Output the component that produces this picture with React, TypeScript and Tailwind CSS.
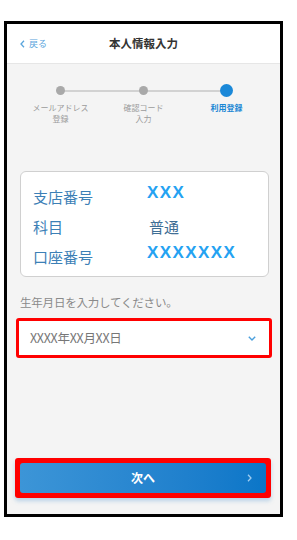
import React from 'react';

const jp = { fontFamily: '"Noto Sans CJK JP", "Noto Sans", sans-serif' };
const latin = { fontFamily: '"Liberation Sans", Arial, sans-serif' };

const Row = ({ label, value, strong }: { label: string; value: string; strong?: boolean }) => (
  <div className="h-[30px] flex items-center">
    <span className="w-[114px] text-[15px] text-[#3c80b6]">{label}</span>
    {strong ? (
      <span className="mb-[9px] text-[17px] font-bold tracking-[1.4px] text-[#24a2f2]" style={latin}>
        {value}
      </span>
    ) : (
      <span className="ml-[2px] text-[15px] text-[#3f6f95]">{value}</span>
    )}
  </div>
);

const StepLabel = ({ lines, active }: { lines: string[]; active?: boolean }) => (
  <div className={active ? 'font-bold text-[#1b87d4]' : 'text-[#9c9c9c]'}>
    {lines.map((l) => (
      <div key={l} className="h-[11px] leading-[11px]">
        {l}
      </div>
    ))}
  </div>
);

export default function App() {
  return (
    <div className="w-[297px] h-[540px] bg-white pt-[21px] pl-[4px]" style={jp}>
      <div className="w-[279px] h-[496px] border-[3px] border-black bg-[#f4f4f4] flex flex-col">
        {/* header */}
        <div className="h-[40px] shrink-0 bg-white border-b border-[#e6e6e6] grid grid-cols-3 items-center">
          <div className="flex items-center pl-[13px] gap-[4px] text-[#5aa5dc]">
            <svg width="5" height="8" viewBox="0 0 5 8">
              <path d="M4 0.8 L1 4 L4 7.2" fill="none" stroke="#5aa5dc" strokeWidth="1.3" />
            </svg>
            <span className="text-[9px] leading-none">戻る</span>
          </div>
          <div className="text-center text-[11.5px] font-bold text-[#333] whitespace-nowrap">本人情報入力</div>
          <div />
        </div>

        {/* stepper */}
        <div className="px-[12px] pt-[20px]">
          <div className="relative grid grid-cols-3 h-[13px]">
            <div className="absolute left-[42px] right-[42px] top-[5.5px] h-[2px] bg-[#d2d2d2]" />
            <div className="relative flex items-center justify-center">
              <div className="w-[9px] h-[9px] rounded-full bg-[#a9a9a9]" />
            </div>
            <div className="relative flex items-center justify-center">
              <div className="w-[9px] h-[9px] rounded-full bg-[#a9a9a9]" />
            </div>
            <div className="relative flex items-center justify-center">
              <div className="w-[13px] h-[13px] rounded-full bg-[#1a88d8]" />
            </div>
          </div>
          <div className="grid grid-cols-3 mt-[5px] text-[8px] text-center">
            <StepLabel lines={['メールアドレス', '登録']} />
            <StepLabel lines={['確認コード', '入力']} />
            <StepLabel lines={['利用登録']} active />
          </div>
        </div>

        {/* account card */}
        <div className="ml-[13px] mt-[47px] w-[249px] h-[106px] bg-white border border-[#d0d0d0] rounded-[6px] pt-[10px] px-[12px]">
          <Row label="支店番号" value="XXX" strong />
          <Row label="科目" value="普通" />
          <Row label="口座番号" value="XXXXXXX" strong />
        </div>

        <p className="ml-[13px] mt-[18px] text-[11.5px] leading-[14px] text-[#8a8a8a] tracking-[-0.2px]">生年月日を入力してください。</p>

        {/* birthday select */}
        <div className="ml-[9px] mt-[9px] w-[256px] h-[40px] border-[3px] border-[#ff0000] rounded-[3px] bg-white flex items-center justify-between pl-[11px] pr-[13px]">
          <span className="text-[12.5px] text-[#777] tracking-[-0.3px]">XXXX年XX月XX日</span>
          <svg width="8" height="5" viewBox="0 0 8 5">
            <path d="M0.8 0.8 L4 4 L7.2 0.8" fill="none" stroke="#4a9fdc" strokeWidth="1.4" />
          </svg>
        </div>

        {/* next button */}
        <div className="mt-auto mb-[16px] ml-[8px] w-[256px] bg-[#ff0000] rounded-[3px] p-[5px] shadow-[0_3px_4px_rgba(80,150,210,0.35)]">
          <div className="h-[30px] rounded-[3px] bg-linear-to-r from-[#3c95d7] to-[#0a76c8] relative flex items-center justify-center">
            <span className="text-[12px] font-bold text-white">次へ</span>
            <svg className="absolute right-[14px]" width="5" height="8" viewBox="0 0 5 8">
              <path d="M1 0.8 L4 4 L1 7.2" fill="none" stroke="#9fcdf0" strokeWidth="1.3" />
            </svg>
          </div>
        </div>
      </div>
    </div>
  );
}
